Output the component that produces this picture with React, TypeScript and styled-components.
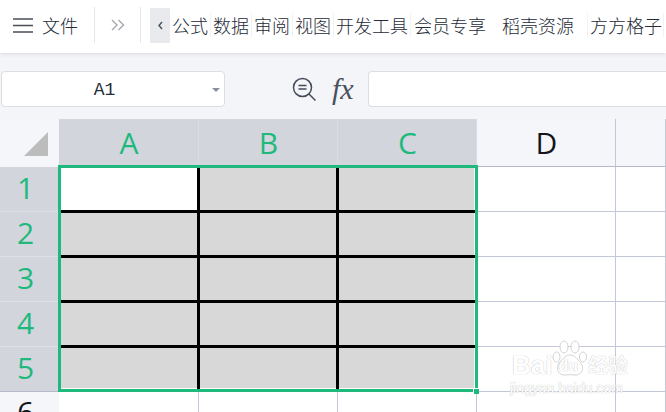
import * as React from 'react';
import styled, { createGlobalStyle } from 'styled-components';

const colors = {
  green: '#1fb97d',
  ink: '#262b38',
  headerSelected: '#d2d5dc',
  headerIdle: '#f5f6f9',
  gridLine: '#c3c8d8',
  selected: '#d8d8d8',
};

const GlobalStyle = createGlobalStyle`
  html, body {
    margin: 0;
    padding: 0;
    width: 666px;
    height: 412px;
    overflow: hidden;
    background: #fff;
  }
`;

const Page = styled.div`
  width: 666px;
  height: 412px;
  display: flex;
  flex-direction: column;
  overflow: hidden;
  position: relative;
  font-family: "Noto Sans CJK SC", "Noto Sans", sans-serif;
`;

const Ribbon = styled.header`
  height: 53px;
  flex: none;
  box-sizing: border-box;
  padding-bottom: 3px;
  display: flex;
  align-items: center;
  background: #fff;
  box-shadow: 0 1px 4px rgba(60, 64, 80, 0.14);
  position: relative;
  z-index: 3;
`;

const MenuButton = styled.div`
  width: 94px;
  padding-left: 13px;
  box-sizing: border-box;
  display: flex;
  align-items: center;
  gap: 9px;
  font-size: 18px;
  font-weight: 300;
  color: ${colors.ink};
`;

const Divider = styled.div`
  width: 1px;
  height: 36px;
  background: #e4e6ea;
  flex: none;
`;

const MoreButton = styled.div`
  width: 45px;
  display: flex;
  justify-content: center;
`;

const BackButton = styled.div`
  width: 20px;
  height: 35px;
  margin-left: 9px;
  background: #e8eaee;
  display: flex;
  align-items: center;
  justify-content: center;
  flex: none;
`;

const Tabs = styled.nav`
  display: flex;
  margin-left: 2px;
  height: 24px;
  align-items: center;
`;

const Tab = styled.div<{ $gap: number; $rule?: number }>`
  font-size: 18px;
  line-height: 24px;
  color: ${colors.ink};
  white-space: nowrap;
  margin-right: ${({ $gap }) => $gap}px;
  position: relative;
  font-weight: 300;

  &::after {
    content: '';
    display: ${({ $rule }) => ($rule ? 'block' : 'none')};
    position: absolute;
    right: ${({ $rule }) => -($rule || 0)}px;
    top: 0;
    width: 1px;
    height: 24px;
    background: #f1f2f4;
  }
`;

const FormulaBar = styled.div`
  height: 66px;
  flex: none;
  background: #f4f5f8;
  display: flex;
  align-items: flex-start;
  padding: 18px 0 0 1px;
  box-sizing: border-box;
`;

const NameBox = styled.div`
  width: 224px;
  height: 36px;
  box-sizing: border-box;
  background: #fff;
  border: 1px solid #dcdee3;
  border-radius: 4px;
  display: flex;
  align-items: center;
  justify-content: center;
  position: relative;
  padding: 1px 17px 0 0;
  font-family: "Liberation Mono", monospace;
  font-size: 18px;
  color: ${colors.ink};
`;

const Caret = styled.span`
  position: absolute;
  right: 4px;
  top: 16px;
  border-left: 4px solid transparent;
  border-right: 4px solid transparent;
  border-top: 4px solid #8a8f9c;
`;

const FormulaTools = styled.div`
  width: 143px;
  height: 36px;
  display: flex;
  align-items: center;
  padding-left: 67px;
  box-sizing: border-box;
  gap: 15px;
  flex: none;
`;

const FxLabel = styled.span`
  font-family: "Liberation Serif", serif;
  font-style: italic;
  font-size: 30px;
  line-height: 36px;
  color: #4a5060;
`;

const FormulaInput = styled.div`
  flex: 1;
  height: 36px;
  box-sizing: border-box;
  background: #fff;
  border: 1px solid #dcdee3;
  border-right: none;
  border-radius: 4px 0 0 4px;
`;

const Sheet = styled.div`
  flex: 1;
  position: relative;
  display: grid;
  grid-template-columns: 59px 140px 139px 139px 139px 1fr;
  grid-template-rows: 48px repeat(5, 45px) 1fr;
  background: #fff;
`;

const Corner = styled.div`
  background: ${colors.headerIdle};
  display: flex;
  align-items: flex-end;
  justify-content: flex-end;
  padding: 0 11px 11px 0;
`;

const ColumnHeader = styled.div<{ $active?: boolean }>`
  background: ${({ $active }) => ($active ? colors.headerSelected : colors.headerIdle)};
  border-right: 1px solid ${({ $active }) => ($active ? '#d9dce6' : colors.gridLine)};
  border-bottom: 1px solid ${({ $active }) => ($active ? colors.headerSelected : '#b4b9cc')};
  box-sizing: border-box;
  display: flex;
  align-items: center;
  justify-content: center;
  padding-left: 1px;
  font-family: "Open Sans", sans-serif;
  font-size: 30px;
  color: ${({ $active }) => ($active ? colors.green : '#14161c')};
`;

const RowHeader = styled.div<{ $active?: boolean; $last?: boolean }>`
  background: ${({ $active }) => ($active ? colors.headerSelected : colors.headerIdle)};
  border-bottom: 1px solid ${({ $active, $last }) => ($last ? '#b4b9cc' : $active ? '#dde0ea' : 'transparent')};
  box-sizing: border-box;
  display: flex;
  align-items: center;
  justify-content: center;
  padding: 0 8px 3px 0;
  font-family: "Open Sans", sans-serif;
  font-size: 30px;
  line-height: 40px;
  color: ${({ $active }) => ($active ? colors.green : '#14161c')};
  overflow: hidden;
`;

const TailRowHeader = styled(RowHeader)`
  align-items: flex-start;
  padding-top: 0;
  width: 60px;
  border-right: 1px solid ${colors.gridLine};
  position: relative;
`;

const Cell = styled.div<{ $shaded?: boolean; $ruleRight?: boolean; $ruleBottom?: boolean }>`
  box-sizing: border-box;
  position: relative;
  background: ${({ $shaded }) => ($shaded ? colors.selected : '#fff')};
  border-right: 1px solid ${colors.gridLine};
  border-bottom: 1px solid ${colors.gridLine};

  /* the sheet's thick borders sit centred on the grid lines */
  &::before {
    content: '';
    display: ${({ $ruleRight }) => ($ruleRight ? 'block' : 'none')};
    position: absolute;
    z-index: 1;
    top: -1px;
    bottom: -1px;
    right: -2px;
    width: 3px;
    background: #000;
  }

  &::after {
    content: '';
    display: ${({ $ruleBottom }) => ($ruleBottom ? 'block' : 'none')};
    position: absolute;
    z-index: 1;
    left: -1px;
    right: -2px;
    bottom: -2px;
    height: 3px;
    background: #000;
  }
`;

/* thin white line inside the selection, under the black rules */
const SelectionInset = styled.div`
  position: absolute;
  z-index: 0;
  left: 61px;
  top: 49px;
  width: 414px;
  height: 221px;
  box-sizing: border-box;
  border-right: 1px solid #fff;
  border-bottom: 1px solid #fff;
`;

const Selection = styled.div`
  position: absolute;
  z-index: 2;
  left: 58px;
  top: 46px;
  width: 420px;
  height: 227px;
  box-sizing: border-box;
  border: 3px solid ${colors.green};
  pointer-events: none;
`;

const Handle = styled.span`
  position: absolute;
  right: -4px;
  bottom: -5px;
  width: 6px;
  height: 6px;
  box-sizing: border-box;
  background: ${colors.green};
  border-left: 1px solid #fff;
  border-top: 1px solid #fff;
`;

const Watermark = styled.div`
  position: absolute;
  z-index: 2;
  left: 510px;
  top: 221px;
  width: 122px;
  height: 66px;
  color: #fff;
  font-family: "Liberation Sans", sans-serif;
  text-shadow: 0 0 1px #c4c4c4, 0 0 1px #d4d4d4;
  pointer-events: none;
`;

const MarkTop = styled.div`
  position: relative;
  display: flex;
  align-items: flex-end;
  padding-left: 2px;
  font-size: 26px;
  font-weight: 700;
  line-height: 24px;
  height: 37px;
`;

const MarkDu = styled.span`
  font-size: 16px;
  line-height: 22px;
  margin: 0 10px 0 6px;
`;

const MarkCn = styled.span`
  font-family: "Noto Sans CJK SC", sans-serif;
  font-size: 20px;
  line-height: 24px;
  font-weight: 500;
`;

const MarkUrl = styled.div`
  font-size: 14px;
  line-height: 16px;
  margin-top: 3px;
  white-space: nowrap;
`;

const Paw = styled.svg`
  position: absolute;
  left: 42px;
  top: 0;
`;

const tabs = [
  { label: '公式', gap: 5, rule: 3 },
  { label: '数据', gap: 5, rule: 3 },
  { label: '审阅', gap: 5, rule: 3 },
  { label: '视图', gap: 5, rule: 3 },
  { label: '开发工具', gap: 6, rule: 3 },
  { label: '会员专享', gap: 16, rule: 0 },
  { label: '稻壳资源', gap: 16, rule: 14 },
  { label: '方方格子', gap: 0, rule: 2 },
];

const columns = ['A', 'B', 'C', 'D'];
const rows = [1, 2, 3, 4, 5];

export default function App() {
  return (
    <Page>
      <GlobalStyle />
      <Ribbon>
        <MenuButton>
          <svg width="20" height="15" viewBox="0 0 20 15">
            <path d="M0 1h20M0 7.5h20M0 14h20" stroke="#4a4d55" strokeWidth="1.4" fill="none" />
          </svg>
          文件
        </MenuButton>
        <Divider />
        <MoreButton>
          <svg width="14" height="12" viewBox="0 0 14 12">
            <path d="M1 1l5 5-5 5M7.5 1l5 5-5 5" stroke="#a5a8ae" strokeWidth="1.4" fill="none" />
          </svg>
        </MoreButton>
        <Divider />
        <BackButton>
          <svg width="5" height="9" viewBox="0 0 5 9">
            <path d="M4 1L1 4.5 4 8" stroke="#4a4f5c" strokeWidth="1.4" fill="none" />
          </svg>
        </BackButton>
        <Tabs>
          {tabs.map(tab => (
            <Tab key={tab.label} $gap={tab.gap} $rule={tab.rule}>{tab.label}</Tab>
          ))}
        </Tabs>
      </Ribbon>

      <FormulaBar>
        <NameBox>
          A1
          <Caret />
        </NameBox>
        <FormulaTools>
          <svg width="25" height="25" viewBox="0 0 25 25">
            <circle cx="10.5" cy="10.5" r="9" stroke="#444b5c" strokeWidth="1.5" fill="none" />
            <path d="M6.5 8.5h8M6.5 12h8" stroke="#444b5c" strokeWidth="1.5" fill="none" />
            <path d="M17 17l6.5 6.5" stroke="#444b5c" strokeWidth="1.5" fill="none" />
          </svg>
          <FxLabel>fx</FxLabel>
        </FormulaTools>
        <FormulaInput />
      </FormulaBar>

      <Sheet>
        <Corner>
          <svg width="24" height="24" viewBox="0 0 24 24">
            <path d="M24 0v24H0z" fill="#bcbcbc" />
          </svg>
        </Corner>
        {columns.map((column, i) => (
          <ColumnHeader key={column} $active={i < 3}>{column}</ColumnHeader>
        ))}
        <ColumnHeader />
        {rows.map(row => (
          <React.Fragment key={row}>
            <RowHeader $active $last={row === 5}>{row}</RowHeader>
            {columns.map((column, i) => (
              <Cell
                key={column}
                $shaded={i < 3 && !(row === 1 && i === 0)}
                $ruleRight={i < 2}
                $ruleBottom={i < 3 && row < 5}
              />
            ))}
            <Cell />
          </React.Fragment>
        ))}
        <TailRowHeader>6</TailRowHeader>
        {columns.map(column => <Cell key={column} />)}
        <Cell />
        <SelectionInset />
        <Selection>
          <Handle />
        </Selection>
        <Watermark>
          <Paw width="36" height="38" viewBox="0 0 36 38">
            <g fill="#fff" stroke="#d4d4d4" strokeWidth="1">
              <ellipse cx="4.5" cy="17" rx="3.5" ry="5" />
              <ellipse cx="12" cy="7" rx="4" ry="6" />
              <ellipse cx="23" cy="7" rx="4" ry="6" />
              <ellipse cx="31" cy="17" rx="3.5" ry="5" />
              <path d="M18 15c-5 0-7 4-11 8-4 6 0 13 7 12 3-.4 5-.6 8 0 7 1 11-6 7-12-4-4-6-8-11-8z" />
            </g>
          </Paw>
          <MarkTop>
            Bai<MarkDu>du</MarkDu><MarkCn>经验</MarkCn>
          </MarkTop>
          <MarkUrl>jingyan.baidu.com</MarkUrl>
        </Watermark>
      </Sheet>
    </Page>
  );
}
